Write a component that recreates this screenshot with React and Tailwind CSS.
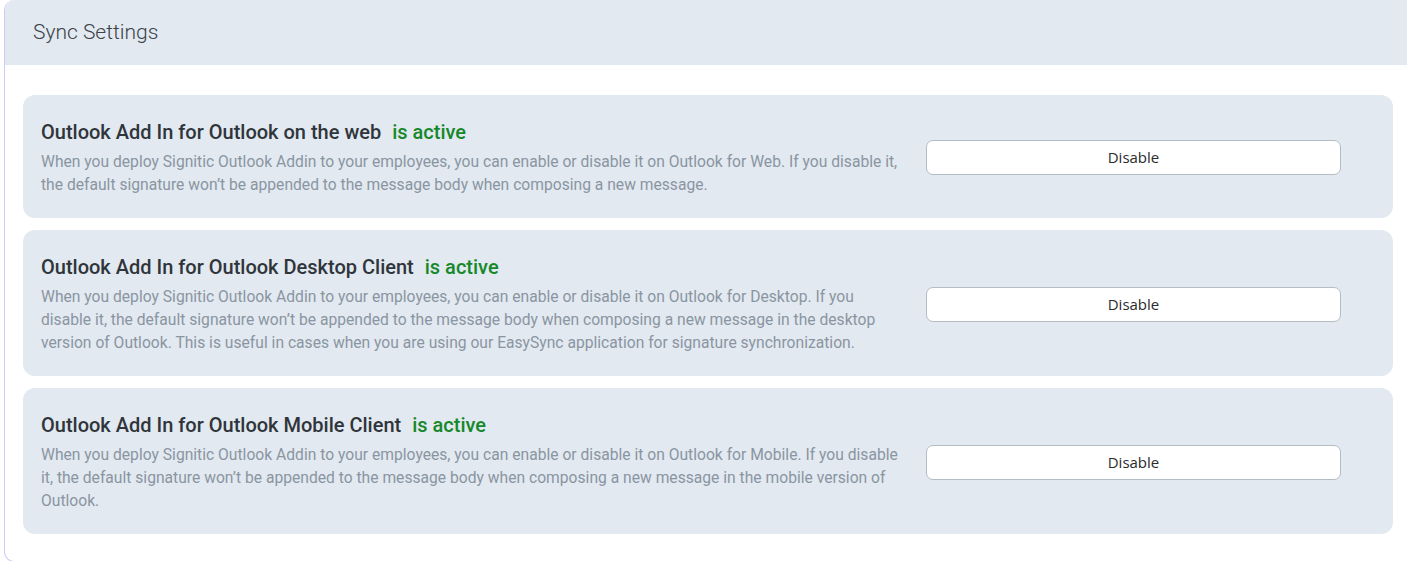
const addins = [
  {
    title: "Outlook Add In for Outlook on the web",
    text: "When you deploy Signitic Outlook Addin to your employees, you can enable or disable it on Outlook for Web. If you disable it, the default signature won’t be appended to the message body when composing a new message.",
  },
  {
    title: "Outlook Add In for Outlook Desktop Client",
    text: "When you deploy Signitic Outlook Addin to your employees, you can enable or disable it on Outlook for Desktop. If you disable it, the default signature won’t be appended to the message body when composing a new message in the desktop version of Outlook. This is useful in cases when you are using our EasySync application for signature synchronization.",
  },
  {
    title: "Outlook Add In for Outlook Mobile Client",
    text: "When you deploy Signitic Outlook Addin to your employees, you can enable or disable it on Outlook for Mobile. If you disable it, the default signature won’t be appended to the message body when composing a new message in the mobile version of Outlook.",
  },
];

export default function App() {
  return (
    <div className="h-[561px] overflow-hidden bg-white font-['Roboto',sans-serif]">
      <div className="ml-[4px] h-[562px] rounded-l-[10px] border-l border-b border-[#cdcaf7] overflow-hidden">
        {/* header */}
        <div className="h-[65px] bg-[#e2e9f0] flex items-center pl-[28px]">
          <h2 className="text-[21px] font-light text-[#3b4249]">Sync Settings</h2>
        </div>

        {/* cards */}
        <div className="flex flex-col gap-[12px] pt-[30px] pl-[18px] pr-[14px]">
          {addins.map((a) => (
            <div
              key={a.title}
              className="flex items-center gap-[25px] rounded-[12px] bg-[#e2e9f0] pl-[18px] pr-[52px] pt-[24px] pb-[22px]"
            >
              <div className="w-[860px]">
                <div className="h-[26px] mb-[5px] text-[20px] leading-[26px] font-medium text-[#2f353b]">
                  {a.title}
                  <span className="ml-[11px] text-[#16882a]">is active</span>
                </div>
                <p className="text-[15.65px] leading-[23px] text-[#8a95a2]">{a.text}</p>
              </div>
              <button className="h-[35px] w-[415px] rounded-[7px] border border-[#b4bcc4] bg-white font-['Open_Sans',sans-serif] text-[15px] font-medium text-[#2b2b2b]">
                Disable
              </button>
            </div>
          ))}
        </div>
      </div>
    </div>
  );
}
